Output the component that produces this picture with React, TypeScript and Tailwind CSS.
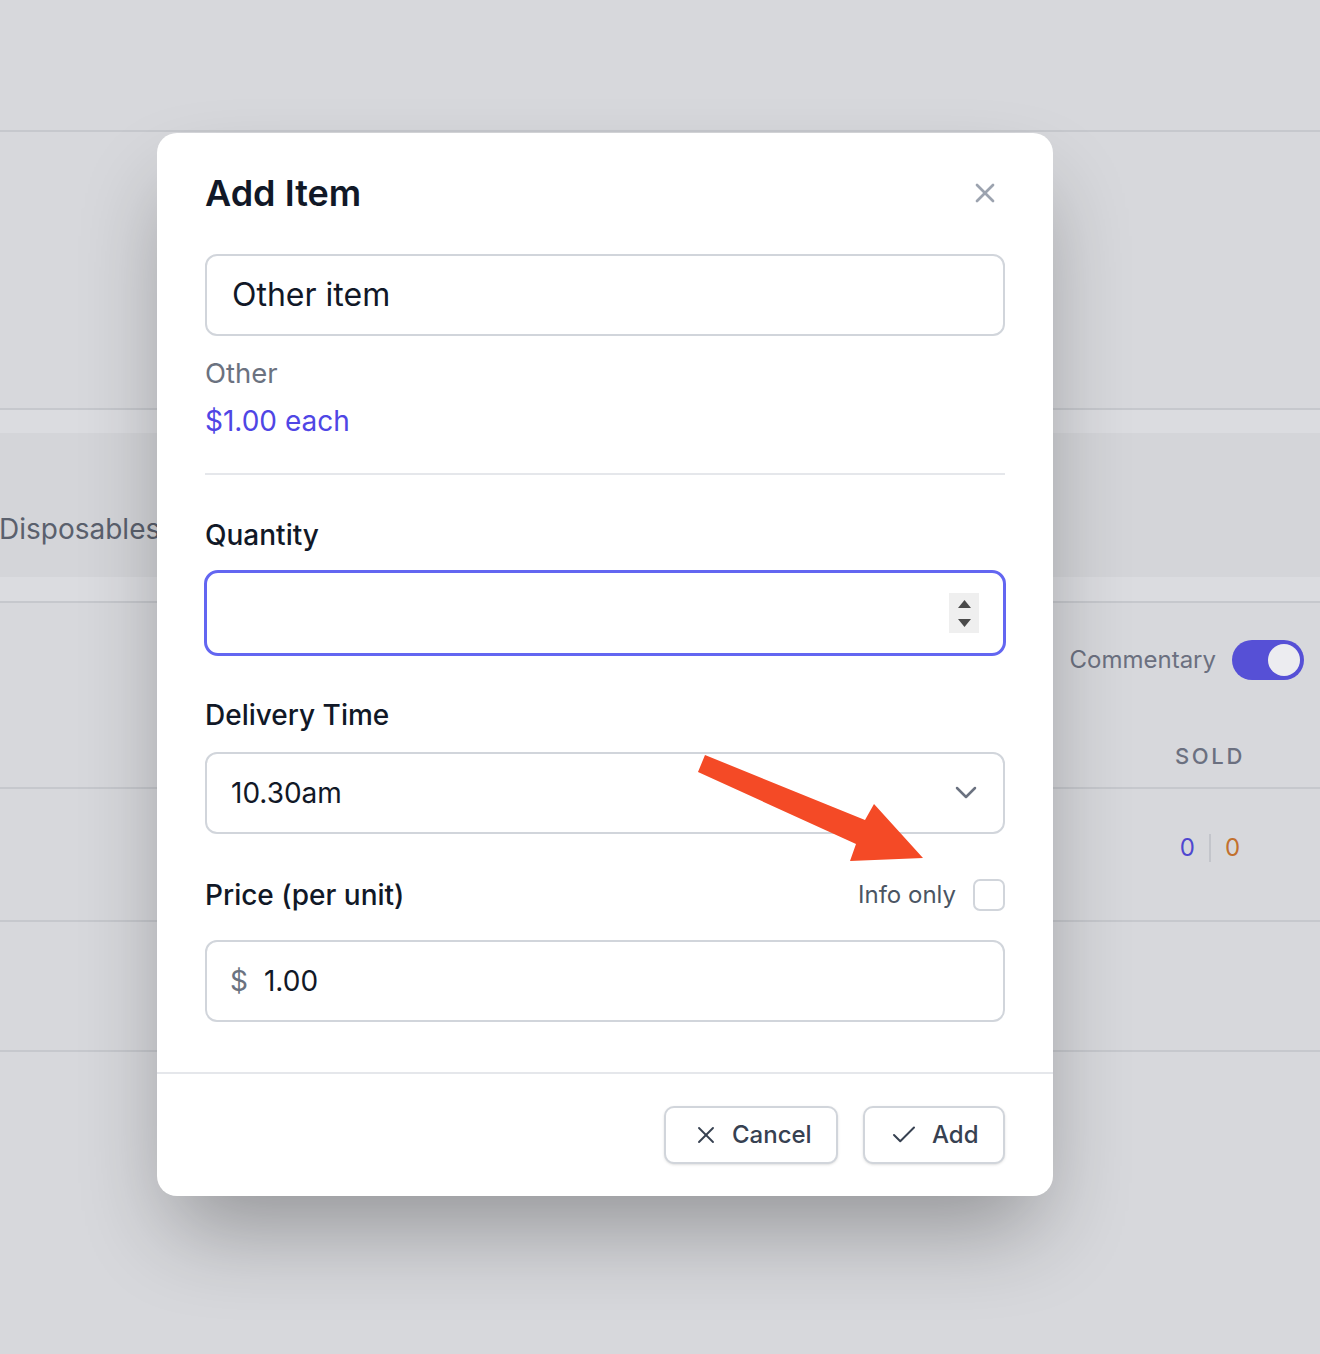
import React from "react";

const font = { fontFamily: "Inter, 'Noto Sans', sans-serif" };

function XIcon({ className, sw = 2 }: { className?: string; sw?: number }) {
  return (
    <svg viewBox="0 0 24 24" fill="none" stroke="currentColor" strokeWidth={sw} strokeLinecap="round" strokeLinejoin="round" className={className}>
      <path d="M18 6 6 18" />
      <path d="m6 6 12 12" />
    </svg>
  );
}

function CheckIcon({ className }: { className?: string }) {
  return (
    <svg viewBox="0 0 24 24" fill="none" stroke="currentColor" strokeWidth={1.6} strokeLinecap="round" strokeLinejoin="round" className={className}>
      <path d="M20 6 9 17l-5-5" />
    </svg>
  );
}

export default function App() {
  return (
    <div style={font} className="relative w-[1320px] h-[1354px] overflow-hidden bg-[#d7d8dc]">
      {/* background page */}
      <div className="flex flex-col">
        <div className="h-[130px]" />
        <div className="h-[2px] bg-[#c6c8cd]" />
        <div className="h-[276px]" />
        <div className="h-[2px] bg-[#c6c8cd]" />
        <div className="h-[23px] bg-[#dbdce0]" />
        <div className="h-[144px] bg-[#d4d5d9] pt-[78px]">
          <div className="-ml-[1px] text-[28px] leading-[36px] text-[#5a606d]">Disposables</div>
        </div>
        <div className="h-[24px] bg-[#dbdce0]" />
        <div className="h-[2px] bg-[#c6c8cd]" />
        <div className="h-[184px] flex flex-col items-end">
          <div className="mt-[37px] mr-[16px] flex items-center gap-[16px]">
            <span className="text-[24px] text-[#6b7080]">Commentary</span>
            <div className="w-[72px] h-[40px] rounded-full bg-[#5650d6] flex items-center justify-end pr-[4px]">
              <div className="w-[32px] h-[32px] rounded-full bg-[#ececf0]" />
            </div>
          </div>
          <div className="mt-[60px] mr-[50px] w-[120px] text-center text-[22px] font-medium tracking-[0.12em] text-[#6b7080]">SOLD</div>
        </div>
        <div className="h-[2px] bg-[#c6c8cd]" />
        <div className="h-[131px] flex items-start justify-end">
          <div className="mt-[45px] mr-[50px] w-[120px] flex items-center justify-center gap-[14px] text-[24px] leading-[28px]">
            <span className="text-[#4f47d0]">0</span>
            <span className="w-[2px] h-[28px] bg-[#c3c5cb]" />
            <span className="text-[#c2702e]">0</span>
          </div>
        </div>
        <div className="h-[2px] bg-[#c6c8cd]" />
        <div className="h-[128px]" />
        <div className="h-[2px] bg-[#c6c8cd]" />
      </div>

      {/* modal */}
      <div className="absolute left-[157px] top-[133px] w-[896px] h-[1063px] rounded-[20px] bg-white shadow-[0_45px_90px_-15px_rgba(0,0,0,0.32)] flex flex-col">
        <div className="px-[48px] pt-[39px] flex flex-col">
          <div className="flex items-center justify-between h-[42px]">
            <h2 className="text-[36px] leading-[42px] font-semibold text-[#111827]">Add Item</h2>
            <XIcon className="w-[32px] h-[32px] text-[#9ca3af] mr-[4px]" />
          </div>
          <div className="mt-[40px] h-[82px] rounded-[12px] border-2 border-[#d1d5db] flex items-center pl-[25px] text-[32px] text-[#111827]">
            Other item
          </div>
          <div className="mt-[13px] text-[27.5px] leading-[48px] text-[#6b7280]">Other</div>
          <div className="text-[28px] leading-[48px] text-[#4f46e5]">$1.00 each</div>
          <div className="mt-[28px] h-[2px] bg-[#e5e7eb]" />

          <div className="mt-[42px] text-[28px] leading-[36px] font-medium text-[#111827]">Quantity</div>
          <div className="mt-[17px] -mx-[1px] h-[86px] rounded-[14px] border-[3px] border-[#6366f1] flex items-center justify-end pr-[24px]">
            <div className="w-[30px] h-[40px] bg-[#efefef] flex flex-col items-center justify-center gap-[11px]">
              <svg width="13" height="8" viewBox="0 0 13 8"><path d="M6.5 0 13 8H0z" fill="#4a4a4a" /></svg>
              <svg width="13" height="8" viewBox="0 0 13 8"><path d="M0 0h13L6.5 8z" fill="#4a4a4a" /></svg>
            </div>
          </div>

          <div className="mt-[41px] text-[28px] leading-[36px] font-medium text-[#111827]">Delivery Time</div>
          <div className="mt-[19px] h-[82px] rounded-[12px] border-2 border-[#d1d5db] flex items-center justify-between pl-[24px] pr-[26px] text-[28px] text-[#111827]">
            <span>10.30am</span>
            <svg width="22" height="14" viewBox="0 0 22 14" fill="none" stroke="#6b7280" strokeWidth="2.5" strokeLinecap="round" strokeLinejoin="round">
              <path d="M2 2l9 9 9-9" />
            </svg>
          </div>

          <div className="mt-[43px] h-[36px] flex items-center justify-between">
            <span className="text-[28px] leading-[36px] font-medium text-[#111827]">Price (per unit)</span>
            <div className="flex items-center gap-[17px]">
              <span className="text-[24px] text-[#4b5563]">Info only</span>
              <div className="w-[32px] h-[32px] rounded-[7px] border-2 border-[#d1d5db] bg-white" />
            </div>
          </div>
          <div className="mt-[27px] h-[82px] rounded-[12px] border-2 border-[#d1d5db] flex items-center pl-[23px] text-[28px]">
            <span className="text-[#6b7280]">$</span>
            <span className="ml-[16px] text-[#111827]">1.00</span>
          </div>
        </div>

        <div className="mt-[50px] h-[2px] bg-[#e5e7eb]" />
        <div className="pl-[48px] pr-[48px] pt-[32px] flex justify-end gap-[25px]">
          <button className="h-[58px] w-[174px] shrink-0 rounded-[10px] border-2 border-[#d1d5db] bg-white shadow-sm flex items-center pl-[26px] gap-[12px] text-[24px] font-medium text-[#374151]">
            <XIcon sw={1.6} className="w-[28px] h-[28px] text-[#374151]" />
            <span>Cancel</span>
          </button>
          <button className="h-[58px] w-[142px] shrink-0 rounded-[10px] border-2 border-[#d1d5db] bg-white shadow-sm flex items-center pl-[24px] gap-[13px] text-[24px] font-medium text-[#374151]">
            <CheckIcon className="w-[30px] h-[30px] text-[#374151]" />
            <span>Add</span>
          </button>
        </div>
      </div>

      {/* annotation arrow */}
      <svg className="absolute left-[690px] top-[750px]" width="240" height="120" viewBox="0 0 240 120">
        <polygon points="15,5 175,70 184,54 233,108 160,111 166,94 8,22" fill="#f44a26" strokeLinejoin="round" />
      </svg>
    </div>
  );
}
